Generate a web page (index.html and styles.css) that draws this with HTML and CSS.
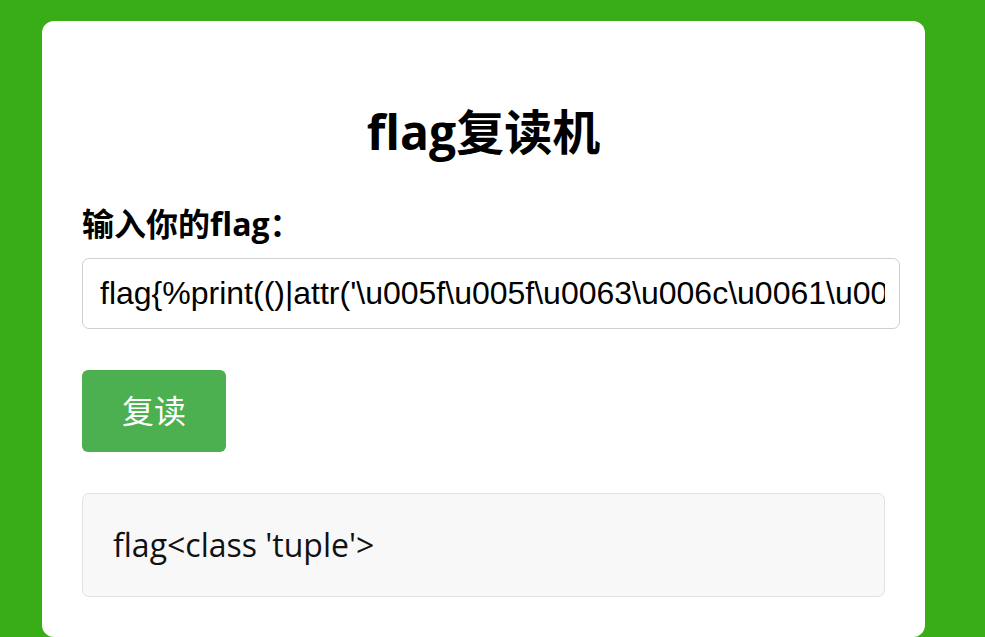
FILE: index.html
```html
<!DOCTYPE html>
<html lang="zh-CN">
<head>
<meta charset="utf-8">
<title>flag复读机</title>
<link rel="stylesheet" href="styles.css">
</head>
<body class="page">
  <main class="card">
    <h1 class="title">flag复读机</h1>
    <form class="form">
      <label class="label" for="flag">输入你的flag：</label>
      <input class="field" id="flag" type="text" value="flag{%print(()|attr('\u005f\u005f\u0063\u006c\u0061\u0073\u0073\u005f\u005f'))%}">
      <button class="btn" type="button">复读</button>
    </form>
    <div class="result">flag&lt;class 'tuple'&gt;</div>
  </main>
</body>
</html>
```
FILE: styles.css
```css
html, body {
  margin: 0;
  padding: 0;
}
.page {
  background: #39ad17;
  min-height: 637px;
  overflow: hidden;
  font-family: "Open Sans", "Noto Sans CJK SC", sans-serif;
  color: #000;
}
.card {
  box-sizing: border-box;
  width: 883px;
  margin: 21px 0 0 42px;
  padding: 40px 40px 40px 40px;
  background: #fff;
  border-radius: 12px;
}
.title {
  margin: 39px 0 40px 0;
  font-size: 48px;
  line-height: 63px;
  font-weight: 700;
  text-align: center;
}
.form {
  display: flex;
  flex-direction: column;
  align-items: flex-start;
  margin: 0;
}
.label {
  display: block;
  font-size: 32px;
  line-height: 42px;
  font-weight: 700;
  margin-bottom: 13px;
}
.field {
  box-sizing: border-box;
  width: 818px;
  height: 71px;
  margin: 0;
  padding: 16px 14px 16px 17px;
  border: 1px solid #cfcfcf;
  border-radius: 7px;
  font-family: "Liberation Sans", Arial, sans-serif;
  font-size: 32px;
  line-height: 37px;
  color: #000;
  background: #fff;
  outline: none;
}
.btn {
  margin-top: 41px;
  padding: 20px 40px;
  border: none;
  border-radius: 6px;
  background: #4caf50;
  color: #fff;
  font-family: "Open Sans", "Noto Sans CJK SC", sans-serif;
  font-size: 32px;
  line-height: 42px;
  cursor: pointer;
}
.result {
  margin-top: 41px;
  padding: 30px;
  border: 1px solid #e2e2e2;
  border-radius: 7px;
  background: #f8f8f8;
  font-size: 32px;
  line-height: 42px;
  color: #111;
}
```
